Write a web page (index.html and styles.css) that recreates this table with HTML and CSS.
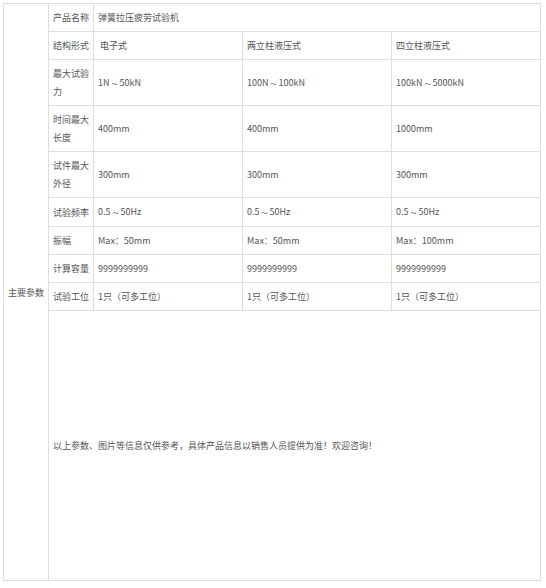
FILE: index.html
```html
<!DOCTYPE html>
<html lang="zh-CN">
<head>
<meta charset="utf-8">
<title>主要参数</title>
<link rel="stylesheet" href="styles.css">
</head>
<body>
<table class="spec">
  <colgroup>
    <col class="c-group">
    <col class="c-label">
    <col class="c-val">
    <col class="c-val">
    <col class="c-val">
  </colgroup>
  <tbody>
    <tr>
      <td class="group" rowspan="10">主要参数</td>
      <td>产品名称</td>
      <td colspan="3">弹簧拉压疲劳试验机</td>
    </tr>
    <tr>
      <td>结构形式</td>
      <td>&nbsp;电子式</td>
      <td>两立柱液压式</td>
      <td>四立柱液压式</td>
    </tr>
    <tr>
      <td>最大试验力</td>
      <td>1N<span class="tilde">～</span>50kN</td>
      <td>100N<span class="tilde">～</span>100kN</td>
      <td>100kN<span class="tilde">～</span>5000kN</td>
    </tr>
    <tr>
      <td>时间最大长度</td>
      <td>400mm</td>
      <td>400mm</td>
      <td>1000mm</td>
    </tr>
    <tr>
      <td>试件最大外径</td>
      <td>300mm</td>
      <td>300mm</td>
      <td>300mm</td>
    </tr>
    <tr>
      <td>试验频率</td>
      <td>0.5<span class="tilde">～</span>50Hz</td>
      <td>0.5<span class="tilde">～</span>50Hz</td>
      <td>0.5<span class="tilde">～</span>50Hz</td>
    </tr>
    <tr>
      <td>振幅</td>
      <td>Max：50mm</td>
      <td>Max：50mm</td>
      <td>Max：100mm</td>
    </tr>
    <tr>
      <td>计算容量</td>
      <td>9999999999</td>
      <td>9999999999</td>
      <td>9999999999</td>
    </tr>
    <tr>
      <td>试验工位</td>
      <td>1只（可多工位）</td>
      <td>1只（可多工位）</td>
      <td>1只（可多工位）</td>
    </tr>
    <tr>
      <td class="note" colspan="4">以上参数、图片等信息仅供参考，具体产品信息以销售人员提供为准！欢迎咨询！</td>
    </tr>
  </tbody>
</table>
</body>
</html>
```

FILE: styles.css
```css
html, body {
  margin: 0;
  padding: 0;
  background: #fff;
}
body {
  padding: 3px;
  font-family: "Noto Sans CJK SC", "Noto Sans", sans-serif;
  font-size: 9px;
  color: #555;
}
.spec {
  border-collapse: collapse;
  table-layout: fixed;
  width: 538px;
}
.c-group { width: 45px; }
.c-label { width: 45px; }
.c-val { width: 149px; }
.spec td {
  border: 1px solid #dedede;
  padding: 5px 4px 4px 4px;
  line-height: 18px;
  vertical-align: middle;
  text-align: left;
  word-break: break-all;
}
.spec td.group {
  padding-left: 4px;
}
.spec td.note {
  height: 260px;
}
.tilde {
  font-size: 6px;
  margin: 0 2px;
}
```
